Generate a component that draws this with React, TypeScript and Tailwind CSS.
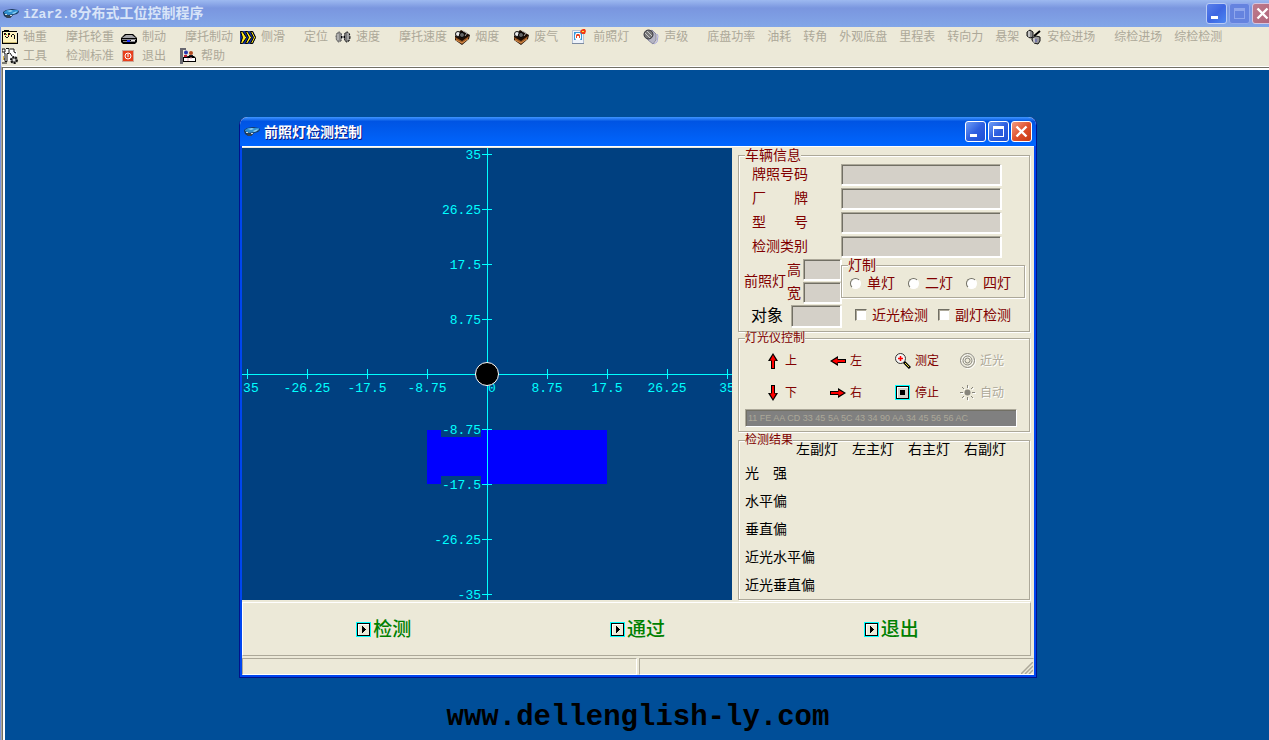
import type { ReactNode } from "react";

type ToolItem = {
  label: string;
  icon?: ReactNode;
  space: string;
};

const dialogInput =
  "border border-r-white border-b-white border-l-[#aca899] border-t-[#aca899] bg-[#d4d0c8] px-1 text-xs text-black shadow-[inset_1px_1px_0_#716f64,1px_1px_0_#fff] outline-none";

const groupBox =
  "min-w-0 border border-[#aca899] px-1 shadow-[1px_1px_0_#fff,inset_1px_1px_0_#fff]";

function CarIcon() {
  return (
    <svg width="16" height="16" viewBox="0 0 16 16" className="shrink-0">
      <path d="M0 6l3-2 6-1 6 1 1 2-2 2-4 1-3 3-3 0-3-2-1-3z" fill="#1b3a5c" />
      <path d="M1 6l3-2 5 0 6 0 0 2-4 2-6 1-4-2z" fill="#2f8fd0" />
      <path d="M4 5l4-1 2 1-3 1zM9 7l5-2-1 2-3 1z" fill="#8fd0f2" />
      <path d="M3 9l4 1 3-1-3 3-3 0z" fill="#3b4550" />
      <path d="M2 8h2v1H2zM7 9h2v1H7z" fill="#cfd8df" />
    </svg>
  );
}

function AxleIcon() {
  return (
    <svg width="16" height="16" viewBox="0 0 16 16" shapeRendering="crispEdges">
      <path d="M1 3h13v10H1z" fill="#fff3bd" />
      <path d="M0 2h2V1h5v1h8v1H0zM0 14h15v1H0zM15 4h1v11h-1zM0 3h1v11H0z" fill="#000" />
      <path d="M1 13h14v1H1z" fill="#c9b871" />
      <path d="M2 4h2v2H2zM6 4h2v2H6zM4 8h2v1H4zM3 7h1v1H3zM6 7h1v1H6zM9 6h1v2H9zM10 5h2v1h-2zM12 6h1v4h-1z" fill="#111" />
      <path d="M3 5h1v1H3zM6 6h1v1H6z" fill="#dd1111" />
      <path d="M4 5h1v1H4z" fill="#00aa00" />
    </svg>
  );
}

function BrakeIcon() {
  return (
    <svg width="16" height="16" viewBox="0 0 16 16">
      <path d="M0 9l4-4h8l4 4v4l-2 2H2l-2-2z" fill="#000" />
      <path d="M1 9l4-3h6l4 3z" fill="#a4a4a8" />
      <path d="M1 10h14v1H1zM2 12h12v1H2z" fill="#88888d" />
      <path d="M6 11h3v2H6z" fill="#2336ff" />
      <path d="M10 11h4v1h-4z" fill="#e9e9e9" />
    </svg>
  );
}

function SlipIcon() {
  return (
    <svg width="16" height="16" viewBox="0 0 16 16">
      <path d="M0 2h13l3 6-3 7H0z" fill="#12309a" />
      <path d="M0.500 2.500h2l4 6-4 6h-2l2-6z" fill="#ffe720" stroke="#000" />
      <path d="M5.500 2.500h2l4 6-4 6h-2l3-6z" fill="#ffe720" stroke="#000" />
      <path d="M10.500 2.500h2l3 6-3 6h-2l3-6z" fill="#ffe720" stroke="#000" />
    </svg>
  );
}

function SpeedIcon() {
  return (
    <svg width="16" height="16" viewBox="0 0 16 16">
      <ellipse cx="4" cy="8" rx="3" ry="5" fill="#8a8a8a" stroke="#555" strokeDasharray="2 1" />
      <ellipse cx="12" cy="8" rx="3" ry="5" fill="#777" stroke="#000" strokeDasharray="2 1" />
      <path d="M6 7h4v2H6z" fill="#000" />
      <path d="M3 5v6M13 4v7" stroke="#d0d0d0" />
      <path d="M8 5v6" stroke="#fff" />
    </svg>
  );
}

function SmokeIcon() {
  return (
    <svg width="16" height="16" viewBox="0 0 16 16">
      <path d="M1 7l6-6 9 5-1 4-7 6-7-5z" fill="#1c0d05" />
      <path d="M1 8l7 4 7-5-1 3-6 5-6-4z" fill="#9a5823" />
      <path d="M2 11l6 3 6-4" stroke="#dc9351" fill="none" />
      <circle cx="4" cy="5" r="2.500" fill="#eee" stroke="#111" />
      <circle cx="8" cy="6" r="2.500" fill="#666" stroke="#000" />
      <path d="M9 2l4 2-2 3" stroke="#aaa" fill="none" />
    </svg>
  );
}

function HeadlampIcon() {
  return (
    <svg width="16" height="16" viewBox="0 0 16 16">
      <path d="M0.500 1.500h11v13h-11z" fill="#eef3fb" stroke="#b3c0d3" />
      <path d="M0 14h12v1H0z" fill="#7d8ba1" />
      <path d="M2 3h8v8H2z" fill="#3899d9" />
      <path d="M4 4h4l1 2v3l-1 2H4L3 9V6z" fill="#fff" />
      <path d="M4 6l1-1h2l1 1v3H7V7H5v2H4z" fill="#e54724" />
      <path d="M9 1l2-1h2l1 2-1 3h-3L8 3z" fill="#f13b12" />
      <path d="M10 2h2v1h-2z" fill="#ffe43d" />
    </svg>
  );
}

function SoundIcon() {
  return (
    <svg width="16" height="16" viewBox="0 0 16 16">
      <path d="M3 6l6-5 4 4v6l-3 4-5-4z" fill="#b5b5c4" stroke="#8888a0" />
      <circle cx="5.500" cy="5.500" r="4.500" fill="#777" stroke="#35353d" />
      <path d="M2 4l5 5M4 2l5 5" stroke="#c8c8c8" />
      <path d="M14 5l1 2-1 6-3 2" stroke="#a8a8dd" fill="none" />
    </svg>
  );
}

function ProbeIcon() {
  return (
    <svg width="16" height="16" viewBox="0 0 16 16">
      <path d="M1 3l3-2 3 2v5L4 9 1 7z" fill="#888" stroke="#111" />
      <path d="M3 2v6" stroke="#fff" />
      <path d="M8 7l6-5" stroke="#000" strokeWidth="2" />
      <path d="M6 9l4-2 4 1v4l-2 3-4-1-2-3z" fill="#999" stroke="#111" />
      <path d="M8 9v5" stroke="#eee" />
      <path d="M10 10v3" stroke="#5555bc" />
    </svg>
  );
}

function ToolIcon() {
  return (
    <svg width="16" height="16" viewBox="0 0 16 16">
      <path d="M1 1h11l3 3v9H1z" fill="#fff" />
      <path d="M0 1h3v3H0zM4 0.500h3v5H5v8H3V5H2M8 1h4v3l2 1M8 5l2 3M1 11h2M0 15h5" stroke="#111" fill="none" />
      <path d="M1 8h1v4H1z" fill="#d8b44a" />
      <circle cx="12" cy="12" r="3" fill="#777" stroke="#111" strokeWidth="2" strokeDasharray="2 1" />
      <circle cx="12" cy="12" r="1" fill="#fff" />
    </svg>
  );
}

function PowerIcon() {
  return (
    <svg width="16" height="16" viewBox="0 0 16 16">
      <rect x="1.500" y="2.500" width="11" height="11" fill="#e83f1b" stroke="#cda99c" />
      <circle cx="7" cy="8" r="3" fill="none" stroke="#fff" />
      <path d="M7 6v3" stroke="#fff" />
    </svg>
  );
}

function HelpIcon() {
  return (
    <svg width="16" height="16" viewBox="0 0 16 16">
      <path d="M0 0h6v2H3v14H0z" fill="#686870" />
      <path d="M3 9h3l2-1h6l2 2v4H3z" fill="#000" />
      <path d="M4 10h11v3H4z" fill="#fff" />
      <path d="M8 10v3M11 9v2" stroke="#e69caf" />
      <circle cx="6" cy="4.500" r="2" fill="#2435ac" />
      <circle cx="11" cy="5" r="2" fill="#b34b21" />
      <path d="M4 7h3v2H4z" fill="#c01b2e" />
      <path d="M9 7h4v1H9z" fill="#17182a" />
    </svg>
  );
}

const firstRow: ToolItem[] = [
  { label: "轴重", icon: <AxleIcon />, space: "ml-px" },
  { label: "摩托轮重", space: "ml-[19px]" },
  { label: "制动", icon: <BrakeIcon />, space: "ml-[7px]" },
  { label: "摩托制动", space: "ml-[19px]" },
  { label: "侧滑", icon: <SlipIcon />, space: "ml-[7px]" },
  { label: "定位", space: "ml-[19px]" },
  { label: "速度", icon: <SpeedIcon />, space: "ml-[7px]" },
  { label: "摩托速度", space: "ml-[19px]" },
  { label: "烟度", icon: <SmokeIcon />, space: "ml-[7px]" },
  { label: "废气", icon: <SmokeIcon />, space: "ml-[14px]" },
  { label: "前照灯", icon: <HeadlampIcon />, space: "ml-[14px]" },
  { label: "声级", icon: <SoundIcon />, space: "ml-[14px]" },
  { label: "底盘功率", space: "ml-[19px]" },
  { label: "油耗", space: "ml-3" },
  { label: "转角", space: "ml-3" },
  { label: "外观底盘", space: "ml-3" },
  { label: "里程表", space: "ml-3" },
  { label: "转向力", space: "ml-3" },
  { label: "悬架", space: "ml-3" },
  { label: "安检进场", icon: <ProbeIcon />, space: "ml-[7px]" },
  { label: "综检进场", space: "ml-[19px]" },
  { label: "综检检测", space: "ml-3" },
];

const secondRow: ToolItem[] = [
  { label: "工具", icon: <ToolIcon />, space: "ml-px" },
  { label: "检测标准", space: "ml-[19px]" },
  { label: "退出", icon: <PowerIcon />, space: "ml-[7px]" },
  { label: "帮助", icon: <HelpIcon />, space: "ml-[14px]" },
];

function ToolRow({ items }: { items: ToolItem[] }) {
  return (
    <div className="flex h-[19px] items-center">
      {items.map((item) => (
        <button
          key={item.label}
          type="button"
          className={`flex shrink-0 items-center gap-[5px] text-xs leading-4 whitespace-nowrap text-[#aca899] ${item.space}`}
        >
          {item.icon}
          {item.label}
        </button>
      ))}
    </div>
  );
}

function WindowButtons({ active }: { active: boolean }) {
  const blue = active
    ? "border-white bg-linear-to-br from-[#6f9cf5] via-[#2f5fe0] to-[#1c4fd6]"
    : "border-[#b9cbf5] bg-linear-to-br from-[#5a80ea] via-[#3e66e2] to-[#4b86f2]";
  const max = active ? blue : "border-[#91a9ee] bg-[#6583df]";
  const close = active
    ? "border-white bg-linear-to-br from-[#f09a80] via-[#e0502c] to-[#c63a12]"
    : "border-[#d5c6e0] bg-linear-to-br from-[#bd7b8c] to-[#b0647a]";
  const base = "flex size-[21px] shrink-0 items-center justify-center rounded-[3px] border";
  return (
    <div className="flex shrink-0 gap-0.5">
      <button type="button" aria-label="最小化" className={`${base} ${blue}`}>
        <svg width="19" height="19" viewBox="0 0 19 19">
          <path d="M4 12h7v3H4z" fill="#fff" />
        </svg>
      </button>
      <button type="button" aria-label="最大化" className={`${base} ${max}`}>
        <svg width="19" height="19" viewBox="0 0 19 19" fill={active ? "#fff" : "#8fa6ec"}>
          <path d="M4 4h11v11H4zM5 7v7h9V7z" fillRule="evenodd" />
        </svg>
      </button>
      <button type="button" aria-label="关闭" className={`${base} ${close}`}>
        <svg width="19" height="19" viewBox="0 0 19 19" fill="none" stroke="#fff" strokeWidth="2.4">
          <path d="M4.500 4.500l10 10M14.500 4.500l-10 10" />
        </svg>
      </button>
    </div>
  );
}

const ticks = [-35, -26.25, -17.5, -8.75, 0, 8.75, 17.5, 26.25, 35];

function BeamChart() {
  return (
    <svg
      viewBox="0 0 490 452"
      role="img"
      aria-label="光轴偏移坐标"
      className="block w-full bg-[#004080] font-['Liberation_Mono',monospace] text-[13px]"
    >
      <rect x="185" y="282" width="180" height="54" fill="#0000ff" />
      <rect x="199" y="273" width="40" height="16" fill="#004080" />
      <rect x="199" y="328" width="40" height="16" fill="#004080" />
      <path d="M0 226.500h490M245.500 0v452" stroke="#00ffff" />
      {ticks.map((value, i) => (
        <g key={value} stroke="#00ffff">
          <path d={`M${i * 60 + 5}.500 221v10`} />
          <path d={`M240 ${446 - i * 55}.500h10`} />
        </g>
      ))}
      <g fill="#00ffff">
        {ticks.map((value, i) => (
          <text key={value} x={value === 0 ? 250 : i * 60 + 5} y="244" textAnchor="middle">
            {value}
          </text>
        ))}
        {ticks.map((value, i) =>
          value === 0 ? null : (
            <text key={value} x="239" y={451 - i * 55} textAnchor="end">
              {value}
            </text>
          )
        )}
      </g>
      <circle cx="245" cy="226" r="11.500" fill="#000" stroke="#fff" />
    </svg>
  );
}

function FieldRow({ id, label }: { id: string; label: string }) {
  return (
    <div className="flex h-6 items-center pr-6 pl-[9px]">
      <label htmlFor={id} className="w-[89px] shrink-0 whitespace-pre">
        {label}
      </label>
      <input id={id} type="text" className={`h-[21px] min-w-0 flex-1 ${dialogInput}`} />
    </div>
  );
}

function LampSizeRow({ id, label }: { id: string; label: string }) {
  return (
    <div className="flex h-[23px] items-center">
      <label htmlFor={id} className="shrink-0">
        {label}
      </label>
      <input id={id} type="text" className={`ml-0.5 h-[21px] w-full min-w-0 flex-1 ${dialogInput}`} />
    </div>
  );
}

function Radio({ label }: { label: string }) {
  return (
    <label className="flex items-center gap-1.5">
      <input
        type="radio"
        name="lampSystem"
        className="size-[11px] appearance-none rounded-full border border-t-[#716f64] border-r-white border-b-white border-l-[#716f64] bg-white checked:bg-black"
      />
      {label}
    </label>
  );
}

function Check({ label }: { label: string }) {
  return (
    <label className="flex items-center gap-[5px]">
      <input
        type="checkbox"
        className="size-3 appearance-none border border-t-[#716f64] border-r-[#ece9d8] border-b-[#ece9d8] border-l-[#716f64] bg-white shadow-[inset_1px_1px_0_#aca899] checked:bg-black"
      />
      {label}
    </label>
  );
}

function VehicleInfo() {
  return (
    <fieldset className={`${groupBox} pb-1 text-sm leading-[14px] text-[#800000]`}>
      <legend className="ml-0.5 bg-[#ece9d8]">车辆信息</legend>
      <FieldRow id="plate" label="牌照号码" />
      <FieldRow id="brand" label="厂　　牌" />
      <FieldRow id="model" label="型　　号" />
      <FieldRow id="category" label="检测类别" />
      <div className="flex">
        <div className="w-[98px] shrink-0">
          <div className="flex items-center">
            <span className="w-11 shrink-0 pl-px">前照灯</span>
            <div className="min-w-0 flex-1">
              <LampSizeRow id="lampHeight" label="高" />
              <LampSizeRow id="lampWidth" label="宽" />
            </div>
          </div>
          <div className="flex h-[23px] items-center pl-2 text-base leading-4 text-black">
            <label htmlFor="target" className="w-10 shrink-0">
              对象
            </label>
            <input id="target" type="text" className={`h-[22px] min-w-0 flex-1 ${dialogInput}`} />
          </div>
        </div>
        <div className="flex-1">
          <fieldset className={`${groupBox} h-10`}>
            <legend className="ml-0.5 bg-[#ece9d8]">灯制</legend>
            <div className="flex gap-[13px] pt-1 pl-1">
              <Radio label="单灯" />
              <Radio label="二灯" />
              <Radio label="四灯" />
            </div>
          </fieldset>
          <div className="flex gap-2.5 pt-2.5 pl-3.5">
            <Check label="近光检测" />
            <Check label="副灯检测" />
          </div>
        </div>
      </div>
    </fieldset>
  );
}

function ArrowIcon({ turn }: { turn: number }) {
  return (
    <svg width="16" height="16" viewBox="0 0 16 16">
      <g transform={`rotate(${turn} 8 8)`}>
        <path d="M8 0l5 8h-3v8H6V8H3z" fill="#000" />
        <path d="M8 2l3 5.500H9V15H7V7.500H5z" fill="#ff0000" />
      </g>
    </svg>
  );
}

function MagnifierIcon() {
  return (
    <svg width="16" height="16" viewBox="0 0 16 16">
      <path d="M9 9l6 6" stroke="#000" strokeWidth="3" />
      <path d="M10 10l4 4" stroke="#e8d838" />
      <circle cx="5.500" cy="5.500" r="5" fill="#f5f5f5" stroke="#333" />
      <path d="M5.500 3v5M3 5.500h5" stroke="#ff0000" strokeWidth="1.500" />
    </svg>
  );
}

function StopIcon() {
  return (
    <svg width="16" height="16" viewBox="0 0 16 16" shapeRendering="crispEdges">
      <path d="M0 0h15v15H0z" fill="#00ffff" />
      <path d="M1 1h13v13H1z" fill="#000" />
      <path d="M2 2h11v11H2z" fill="#fff" />
      <path d="M3 3h10v10H3z" fill="#d4d0c8" />
      <path d="M5 5h5v5H5z" fill="#000" />
    </svg>
  );
}

function PlayIcon() {
  return (
    <svg width="16" height="16" viewBox="0 0 16 16" shapeRendering="crispEdges">
      <path d="M0 0h15v15H0z" fill="#00ffff" />
      <path d="M1 1h13v13H1z" fill="#000" />
      <path d="M2 2h11v11H2z" fill="#fff" />
      <path d="M3 3h10v10H3z" fill="#ece9d8" />
      <path d="M6 4h1v1h1v1h1v1h1v1H9v1H8v1H7v1H6z" fill="#000" />
    </svg>
  );
}

function RingsIcon() {
  return (
    <svg width="16" height="16" viewBox="0 0 16 16" fill="none">
      <g stroke="#fff" transform="translate(1 1)">
        <circle cx="7.500" cy="7.500" r="7" />
        <circle cx="7.500" cy="7.500" r="4.500" />
      </g>
      <g stroke="#87857b">
        <circle cx="7.500" cy="7.500" r="7" />
        <circle cx="7.500" cy="7.500" r="4.500" />
        <circle cx="7.500" cy="7.500" r="2.500" />
      </g>
    </svg>
  );
}

const rays = "M7.500 0v3M7.500 12v3M0 7.500h3M12 7.500h3M2 2l2 2M11 11l2 2M2 13l2-2M11 4l2-2";

function SunIcon() {
  return (
    <svg width="16" height="16" viewBox="0 0 16 16">
      <path d={rays} stroke="#fff" transform="translate(1 1)" />
      <path d={rays} stroke="#87857b" />
      <circle cx="7.500" cy="7.500" r="3" fill="#87857b" />
    </svg>
  );
}

const controls = [
  { label: "上", icon: <ArrowIcon turn={0} /> },
  { label: "左", icon: <ArrowIcon turn={270} /> },
  { label: "测定", icon: <MagnifierIcon /> },
  { label: "近光", icon: <RingsIcon />, disabled: true },
  { label: "下", icon: <ArrowIcon turn={180} /> },
  { label: "右", icon: <ArrowIcon turn={90} /> },
  { label: "停止", icon: <StopIcon /> },
  { label: "自动", icon: <SunIcon />, disabled: true },
];

function LampControl() {
  return (
    <fieldset className={`${groupBox} pb-1 text-xs leading-3 text-[#800000]`}>
      <legend className="ml-0.5 bg-[#ece9d8]">灯光仪控制</legend>
      <div className="grid grid-cols-4 pt-px pl-[22px]">
        {controls.map((item) => (
          <button
            key={item.label}
            type="button"
            disabled={item.disabled}
            className="flex h-8 items-center gap-1 disabled:text-[#aca899] disabled:[text-shadow:1px_1px_0_#fff]"
          >
            {item.icon}
            {item.label}
          </button>
        ))}
      </div>
      <input
        type="text"
        readOnly
        aria-label="指令数据"
        value="11 FE AA CD 33 45 5A 5C 43 34 90 AA 34 45 56 56 AC"
        className="mr-2 ml-0.5 block h-[18px] w-[calc(100%-10px)] border border-t-[#aca899] border-r-white border-b-white border-l-[#aca899] bg-[#808080] px-0.5 text-[9px] text-[#aca899] shadow-[inset_1px_1px_0_#716f64] outline-none"
      />
    </fieldset>
  );
}

const lamps = ["左副灯", "左主灯", "右主灯", "右副灯"];
const measures = ["光　强", "水平偏", "垂直偏", "近光水平偏", "近光垂直偏"];

function Results() {
  return (
    <fieldset className={`${groupBox} mt-0.5 flex-1 text-xs leading-3 text-[#800000]`}>
      <legend className="ml-0.5 bg-[#ece9d8]">检测结果</legend>
      <table className="-mt-1 w-[277px] table-fixed text-sm leading-[14px] text-black">
        <thead>
          <tr className="h-[17px] text-left align-top">
            <td className="w-[53px]" />
            {lamps.map((lamp) => (
              <th key={lamp} scope="col" className="p-0 font-normal whitespace-nowrap">
                {lamp}
              </th>
            ))}
          </tr>
        </thead>
        <tbody>
          {measures.map((name) => (
            <tr key={name} className="h-7">
              <th scope="row" className="p-0 pl-0.5 text-left font-normal whitespace-nowrap">
                {name}
              </th>
              {lamps.map((lamp) => (
                <td key={lamp} />
              ))}
            </tr>
          ))}
        </tbody>
      </table>
    </fieldset>
  );
}

function HeadlampDialog() {
  return (
    <section className="w-[798px] max-w-full rounded-t-lg border-x border-b border-[#00138c] bg-[#ece9d8]">
      <header className="flex h-[29px] items-center rounded-t-lg bg-linear-to-b from-[#3f95ff] via-[#0054e3] via-15% to-[#0066ff] px-1">
        <CarIcon />
        <h2 className="ml-1 flex-1 text-sm leading-4 font-bold text-white [text-shadow:1px_1px_0_#0a1883]">
          前照灯检测控制
        </h2>
        <WindowButtons active />
      </header>

      <div className="border-x-2 border-b-2 border-[#0046f0]">
        <div className="flex border-t border-white pt-px">
          <div className="min-w-0 flex-1">
            <BeamChart />
          </div>
          <div className="flex w-[302px] shrink-0 flex-col pr-1 pl-1.5">
            <VehicleInfo />
            <LampControl />
            <Results />
          </div>
        </div>

        <div className="mt-0.5 mr-[3px] grid h-[54px] grid-cols-3 border-t border-r border-b border-l border-t-white border-r-[#aca899] border-b-[#aca899] border-l-white pt-0.5 pr-3 pl-3.5">
          {["检测", "通过", "退出"].map((label) => (
            <button
              key={label}
              type="button"
              className="flex items-center justify-center gap-px text-[19px] leading-6 font-medium text-[#008000]"
            >
              <PlayIcon />
              {label}
            </button>
          ))}
        </div>

        <footer className="mt-0.5 flex h-[17px] gap-0.5">
          <div className="flex-1 border border-t-[#aca899] border-r-white border-b-white border-l-[#aca899]" />
          <div className="flex flex-1 items-end justify-end border border-t-[#aca899] border-r-[#ece9d8] border-b-white border-l-[#aca899]">
            <svg width="12" height="12" viewBox="0 0 12 12">
              <path d="M0 12L12 0M4 12l8-8M8 12l4-4" stroke="#aca899" strokeWidth="1.500" />
            </svg>
          </div>
        </footer>
      </div>
    </section>
  );
}

export default function App() {
  return (
    <div className="flex min-h-screen flex-col overflow-hidden bg-[#ece9d8] font-['Liberation_Sans','Noto_Sans_CJK_SC',sans-serif]">
      <header className="flex h-[27px] items-center bg-linear-to-b from-[#9db9f0] via-[#7a96df] via-30% to-[#82a6e8] pl-[3px]">
        <CarIcon />
        <h1 className="ml-1 flex-1 text-sm leading-4 font-bold text-[#d8e4f8]">
          <span className="font-['Liberation_Mono',monospace] text-[13px]">iZar2.8</span>
          分布式工位控制程序
        </h1>
        <div className="-mr-1">
          <WindowButtons active={false} />
        </div>
      </header>

      <div className="flex flex-1 flex-col border-l border-[#7a96df]">
        <nav>
          <ToolRow items={firstRow} />
          <ToolRow items={secondRow} />
        </nav>
        <div className="mt-px flex flex-1 flex-col border-t border-l border-t-white border-l-[#aca899]">
          <div className="flex flex-1 flex-col border-t border-l border-[#716f64]">
            <main className="flex flex-1 flex-col items-center border-t-2 border-l-2 border-white bg-[#004e98] pt-[47px] pl-0.5">
              <HeadlampDialog />
              <p className="mt-6 font-['Liberation_Mono',monospace] text-[29px] leading-8 font-bold text-black">
                www.dellenglish-ly.com
              </p>
            </main>
          </div>
        </div>
      </div>
    </div>
  );
}
